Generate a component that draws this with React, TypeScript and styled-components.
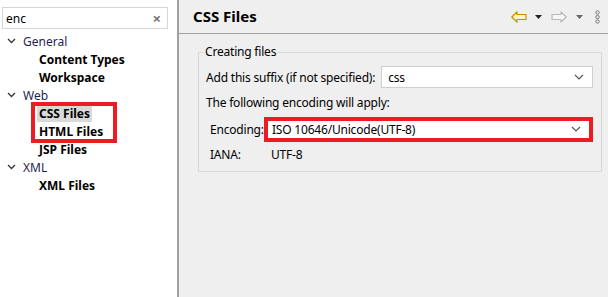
import React from "react";
import styled, { createGlobalStyle } from "styled-components";

const GlobalStyle = createGlobalStyle`
  html, body {
    margin: 0;
    padding: 0;
    width: 608px;
    height: 297px;
    overflow: hidden;
    font-family: "Noto Sans", "Noto Sans CJK KR", sans-serif;
    font-size: 12px;
    color: #000;
  }
`;

const Window = styled.div`
  display: grid;
  grid-template-columns: 177px 2px 1fr;
  width: 608px;
  height: 297px;
`;

const Sidebar = styled.div`
  background: #fff;
  padding: 7px 9px 0 2px;
`;

const Divider = styled.div`
  background: #a0a0a0;
`;

const SearchBox = styled.div`
  display: flex;
  align-items: center;
  height: 20px;
  border: 1px solid #d6d6d6;
  padding: 0 6px 0 3px;
  justify-content: space-between;
  margin-bottom: 3px;
`;

const ClearIcon = styled.span`
  color: #777;
  font-size: 15px;
  font-weight: bold;
  line-height: 1;
`;

const Tree = styled.div`
  display: flex;
  flex-direction: column;
`;

const Row = styled.div<{ $child?: boolean }>`
  display: flex;
  align-items: center;
  height: 18px;
  padding-left: ${p => (p.$child ? "35px" : "5px")};
  font-weight: ${p => (p.$child ? 700 : 400)};
  color: ${p => (p.$child ? "#000" : "#1f1f52")};
`;

const Chevron = styled.svg`
  width: 9px;
  height: 6px;
  margin-right: 7px;
`;

const Label = styled.span<{ $selected?: boolean }>`
  padding: 0 2px;
  background: ${p => (p.$selected ? "#d9d9d9" : "transparent")};
  line-height: 17px;
`;

/* red annotation frame drawn over the two rows */
const Highlight = styled.div`
  position: relative;
  display: flex;
  flex-direction: column;

  &::after {
    content: "";
    position: absolute;
    left: 29px;
    width: 78px;
    top: -2px;
    bottom: -3px;
    border: 4px solid #ed1c24;
    pointer-events: none;
  }
`;

const Main = styled.div`
  background: #efefef;
  display: flex;
  flex-direction: column;
`;

const Header = styled.div`
  height: 33px;
  border-bottom: 1px solid #a0a0a0;
  display: flex;
  align-items: center;
  justify-content: space-between;
  padding: 0 8px 0 14px;
`;

const Title = styled.div`
  font-size: 15px;
  font-weight: 700;
  margin-top: -2px;
`;

const Toolbar = styled.div`
  display: flex;
  align-items: center;
`;

const ToolIcon = styled.svg<{ $gap?: number }>`
  margin-left: ${p => p.$gap ?? 0}px;
`;

const Content = styled.div`
  padding: 11px 6px 0 19px;
`;

const Group = styled.fieldset`
  margin: 0;
  border: 1px solid #d8d8d8;
  padding: 6px 8px 10px 7px;
  height: 127px;
  box-sizing: border-box;
  letter-spacing: -0.2px;
`;

const Legend = styled.legend`
  padding: 0 1px;
  margin-left: -2px;
  line-height: 14px;
`;

const FieldRow = styled.div<{ $h?: number }>`
  display: flex;
  align-items: center;
  height: ${p => p.$h ?? 26}px;
`;

const Text = styled.span<{ $indent?: number; $width?: number }>`
  flex-shrink: 0;
  box-sizing: border-box;
  padding-left: ${p => p.$indent ?? 0}px;
  width: ${p => (p.$width ? `${p.$width}px` : "auto")};
  white-space: nowrap;
`;

const Combo = styled.div<{ $marked?: boolean }>`
  flex: 1;
  display: flex;
  align-items: center;
  justify-content: space-between;
  height: ${p => (p.$marked ? "17px" : "20px")};
  background: #fff;
  border: ${p => (p.$marked ? "4px solid #ed1c24" : "1px solid #cfcfcf")};
  padding: 0 8px 0 ${p => (p.$marked ? "4px" : "6px")};
  margin-left: ${p => (p.$marked ? "0" : "6px")};
`;

const ComboArrow = () => (
  <svg width="10" height="6" viewBox="0 0 10 6">
    <path d="M1 1 L5 5 L9 1" fill="none" stroke="#555" strokeWidth="1.1" />
  </svg>
);

const TreeChevron = () => (
  <Chevron viewBox="0 0 9 6">
    <path d="M1 1 L4.5 4.5 L8 1" fill="none" stroke="#333" strokeWidth="1.3" />
  </Chevron>
);

export default function App() {
  return (
    <>
      <GlobalStyle />
      <Window>
        <Sidebar>
          <SearchBox>
            <span>enc</span>
            <ClearIcon>×</ClearIcon>
          </SearchBox>
          <Tree>
            <Row>
              <TreeChevron />
              General
            </Row>
            <Row $child>
              <Label>Content Types</Label>
            </Row>
            <Row $child>
              <Label>Workspace</Label>
            </Row>
            <Row>
              <TreeChevron />
              Web
            </Row>
            <Highlight>
              <Row $child>
                <Label $selected>CSS Files</Label>
              </Row>
              <Row $child>
                <Label>HTML Files</Label>
              </Row>
            </Highlight>
            <Row $child>
              <Label>JSP Files</Label>
            </Row>
            <Row>
              <TreeChevron />
              XML
            </Row>
            <Row $child>
              <Label>XML Files</Label>
            </Row>
          </Tree>
        </Sidebar>
        <Divider />
        <Main>
          <Header>
            <Title>CSS Files</Title>
            <Toolbar>
              <ToolIcon width="16" height="12" viewBox="0 0 16 12">
                <path
                  d="M0.8 6 L6 0.8 L6 3.5 L15 3.5 L15 8.5 L6 8.5 L6 11.2 Z"
                  fill="#fff3c8"
                  stroke="#d08a00"
                  strokeWidth="1.2"
                  strokeLinejoin="round"
                />
              </ToolIcon>
              <ToolIcon $gap={8} width="7" height="4" viewBox="0 0 7 4">
                <path d="M0 0 L7 0 L3.5 4 Z" fill="#222" />
              </ToolIcon>
              <ToolIcon $gap={9} width="16" height="12" viewBox="0 0 16 12">
                <path
                  d="M15.2 6 L10 0.8 L10 3.5 L1 3.5 L1 8.5 L10 8.5 L10 11.2 Z"
                  fill="#f6f6f6"
                  stroke="#b8b8b8"
                  strokeWidth="1.2"
                  strokeLinejoin="round"
                />
              </ToolIcon>
              <ToolIcon $gap={9} width="7" height="4" viewBox="0 0 7 4">
                <path d="M0 0 L7 0 L3.5 4 Z" fill="#666" />
              </ToolIcon>
              <ToolIcon $gap={12} width="5" height="14" viewBox="0 0 5 14">
                <circle cx="2.5" cy="2.5" r="1.7" fill="none" stroke="#777" />
                <circle cx="2.5" cy="7" r="1.7" fill="none" stroke="#777" />
                <circle cx="2.5" cy="11.5" r="1.7" fill="none" stroke="#777" />
              </ToolIcon>
            </Toolbar>
          </Header>
          <Content>
            <Group>
              <Legend>Creating files</Legend>
              <FieldRow $h={24}>
                <Text>Add this suffix (if not specified):</Text>
                <Combo>
                  <span>css</span>
                  <ComboArrow />
                </Combo>
              </FieldRow>
              <FieldRow $h={26}>
                <Text>The following encoding will apply:</Text>
              </FieldRow>
              <FieldRow $h={28}>
                <Text $indent={4} $width={58}>Encoding:</Text>
                <Combo $marked>
                  <span>ISO 10646/Unicode(UTF-8)</span>
                  <ComboArrow />
                </Combo>
              </FieldRow>
              <FieldRow $h={22}>
                <Text $indent={4} $width={65}>IANA:</Text>
                <Text>UTF-8</Text>
              </FieldRow>
            </Group>
          </Content>
        </Main>
      </Window>
    </>
  );
}
